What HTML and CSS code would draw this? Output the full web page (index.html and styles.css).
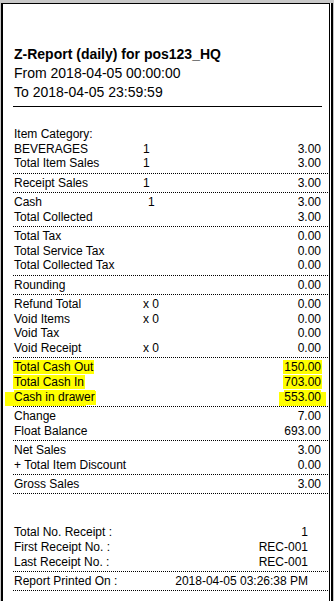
FILE: index.html
```html
<!DOCTYPE html>
<html>
<head>
<meta charset="utf-8">
<link rel="stylesheet" href="styles.css">
</head>
<body>
<div class="page">
  <div class="header">
    <div class="title">Z-Report (daily) for pos123_HQ</div>
    <div>From 2018-04-05 00:00:00</div>
    <div>To 2018-04-05 23:59:59</div>
  </div>
  <div class="group first">
    <div class="row"><span class="label">Item Category:</span></div>
    <div class="row"><span class="label">BEVERAGES</span><span class="mid">1</span><span class="val">3.00</span></div>
    <div class="row"><span class="label">Total Item Sales</span><span class="mid">1</span><span class="val">3.00</span></div>
  </div>
  <div class="group">
    <div class="row"><span class="label">Receipt Sales</span><span class="mid">1</span><span class="val">3.00</span></div>
  </div>
  <div class="group">
    <div class="row"><span class="label">Cash</span><span class="mid shift">1</span><span class="val">3.00</span></div>
    <div class="row"><span class="label">Total Collected</span><span class="val">3.00</span></div>
  </div>
  <div class="group">
    <div class="row"><span class="label">Total Tax</span><span class="val">0.00</span></div>
    <div class="row"><span class="label">Total Service Tax</span><span class="val">0.00</span></div>
    <div class="row"><span class="label">Total Collected Tax</span><span class="val">0.00</span></div>
  </div>
  <div class="group">
    <div class="row"><span class="label">Rounding</span><span class="val">0.00</span></div>
  </div>
  <div class="group">
    <div class="row"><span class="label">Refund Total</span><span class="mid">x 0</span><span class="val">0.00</span></div>
    <div class="row"><span class="label">Void Items</span><span class="mid">x 0</span><span class="val">0.00</span></div>
    <div class="row"><span class="label">Void Tax</span><span class="val">0.00</span></div>
    <div class="row"><span class="label">Void Receipt</span><span class="mid">x 0</span><span class="val">0.00</span></div>
  </div>
  <div class="group">
    <div class="row"><span class="label"><span class="hl">Total Cash Out</span></span><span class="val"><span class="hl">150.00</span></span></div>
    <div class="row"><span class="label"><span class="hl">Total Cash In</span></span><span class="val"><span class="hl">703.00</span></span></div>
    <div class="row"><span class="label"><span class="hl hl-wide">Cash in drawer</span></span><span class="val"><span class="hl hl-wide-r">553.00</span></span></div>
  </div>
  <div class="group">
    <div class="row"><span class="label">Change</span><span class="val">7.00</span></div>
    <div class="row"><span class="label">Float Balance</span><span class="val">693.00</span></div>
  </div>
  <div class="group">
    <div class="row"><span class="label">Net Sales</span><span class="val">3.00</span></div>
    <div class="row"><span class="label wide">+ Total Item Discount</span><span class="val">0.00</span></div>
  </div>
  <div class="group">
    <div class="row"><span class="label">Gross Sales</span><span class="val">3.00</span></div>
  </div>
  <div class="group summary">
    <div class="row"><span class="label">Total No. Receipt :</span><span class="val">1</span></div>
    <div class="row"><span class="label">First Receipt No. :</span><span class="val">REC-001</span></div>
    <div class="row"><span class="label">Last Receipt No. :</span><span class="val">REC-001</span></div>
  </div>
  <div class="group summary-end">
    <div class="row"><span class="label">Report Printed On :</span><span class="val">2018-04-05 03:26:38 PM</span></div>
  </div>
</div>
</body>
</html>
```

FILE: styles.css
```css
html, body {
  margin: 0;
  height: 601px;
  overflow: hidden;
  background: #c8c8c8;
}

body {
  padding-top: 3px;
  box-sizing: border-box;
  font-family: "Liberation Sans", Arial, sans-serif;
  color: #000;
}

.page {
  margin-left: 1px;
  width: 326px;
  height: 598px;
  box-sizing: content-box;
  padding: 0 1px 0 10px;
  width: 315px;
  border-left: 2px solid #000;
  border-top: 1px solid #000;
  border-right: 1px solid #000;
  background: #fff;
  box-shadow: 1px 0 0 #fff, 3px 0 0 #000;
}

.header {
  padding: 41px 0 4px 1px;
  margin-right: 6px;
  border-bottom: 1px solid #000;
  font-size: 14px;
  line-height: 19px;
}

.title {
  font-weight: bold;
}

.group {
  padding: 2px 0 1.6px;
  border-bottom: 1px dotted #000;
}

.group.first {
  padding-top: 20px;
}

.row {
  display: flex;
  font-size: 12px;
  line-height: 14.7px;
  padding: 0 7px 0 1px;
  white-space: nowrap;
}

.label {
  width: 129px;
  flex: none;
}

.mid.shift {
  padding-left: 5px;
}

.val {
  margin-left: auto;
}

.hl {
  background: #ffff00;
  box-shadow: -1px 0 0 #ffff00, 1px 0 0 #ffff00;
}

.hl-wide {
  box-shadow: -9px 2px 0 #ffff00, 1px 1px 0 #ffff00;
}

.hl-wide-r {
  box-shadow: -5px 2px 0 #ffff00, 5px 2px 0 #ffff00;
}

.summary {
  padding-top: 31px;
}

.summary .row,
.summary-end .row {
  padding-right: 20px;
}
```
